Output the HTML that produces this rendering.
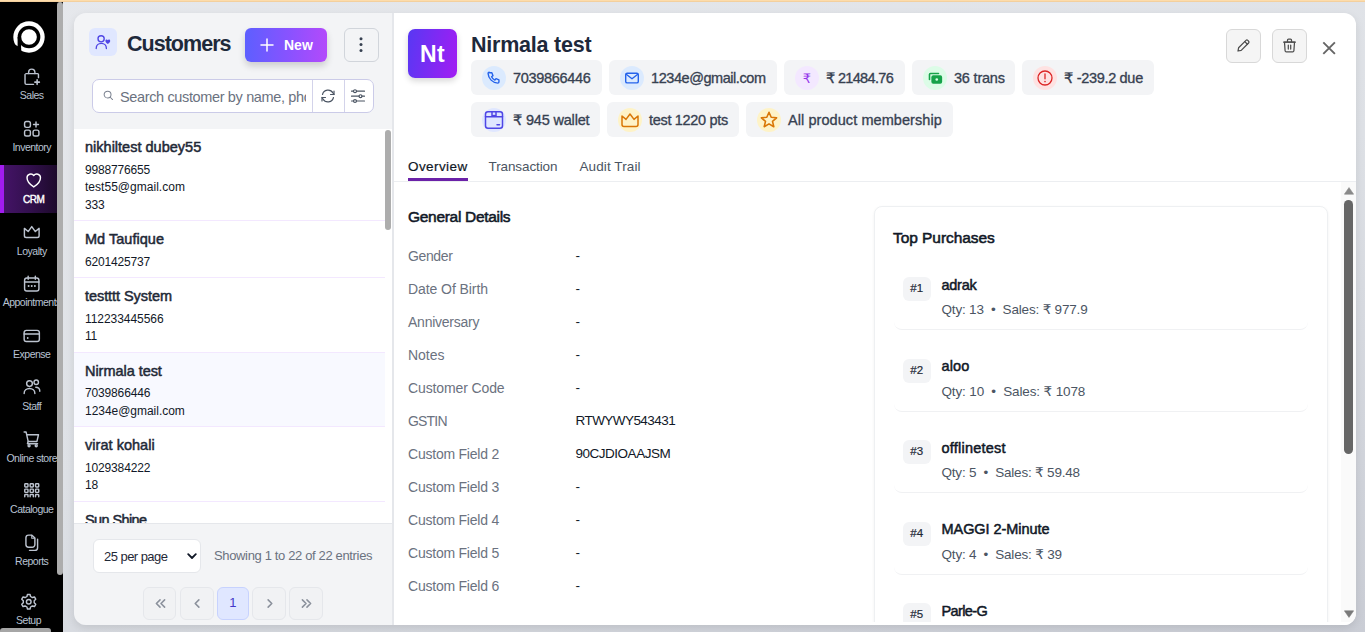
<!DOCTYPE html>
<html lang="en">
<head>
<meta charset="utf-8">
<title>Customers</title>
<style>
*{box-sizing:border-box;margin:0;padding:0}
html,body{width:1365px;height:632px;overflow:hidden}
body{position:relative;background:linear-gradient(165deg,#e6e8ec 0%,#dee1e6 50%,#cacdd5 100%);font-family:"Liberation Sans","DejaVu Sans",sans-serif;color:#111827}
.abs{position:absolute}
#topbar{left:0;top:0;width:1365px;height:2px;background:linear-gradient(#fddcab 0,#fddcab 55%,#e6c08e 100%)}
/* sidebar */
#side{left:0;top:2px;width:63px;height:630px;background:#000;overflow:hidden}#sideclip{left:0;top:0;width:57px;height:630px;overflow:hidden}
#sidescroll{left:0;top:625.500px;width:51px;height:6px;border-radius:3px 3px 0 0;background:#a6a6a6}
#sidethumb{left:57px;top:0px;width:5.500px;height:572.500px;border-radius:3px;background:#adadad}
.nav{position:absolute;left:0;width:63px;text-align:center;color:#c8cdd6;font-size:11px;white-space:nowrap}
.nav svg{position:absolute;left:21px;top:1.500px;width:21.500px;height:21.500px;stroke:#bcc3cf;fill:none;stroke-width:1.600;stroke-linecap:round;stroke-linejoin:round}
.nav.act{color:#fff;margin-left:2px}.nav.act svg{stroke:#fff}.nav.act span{color:#fff;font-weight:400;-webkit-text-stroke:0.400px #fff;letter-spacing:-0.350px;font-size:10px;top:25px}.nav.act svg{top:1.500px}
.nav span{position:absolute;top:25px;left:0;width:63.500px;text-align:center;line-height:13px;font-size:10.500px;letter-spacing:-0.500px;color:#b9c3d3}
/* left panel */
#lp{left:74px;top:13px;width:319px;height:612px;background:#f3f4f6;border-radius:12px 0 0 12px;overflow:hidden}
#rp{left:393px;top:13px;width:963px;height:612px;background:#fff;border-radius:0 12px 12px 0;overflow:hidden}
.cust{position:absolute;left:0;width:311px;border-bottom:1px solid #f3e8ff}
.cust b{position:absolute;left:11px;font-size:14.500px;font-weight:400;-webkit-text-stroke:0.500px #1f2937;color:#1f2937;white-space:nowrap}
.cust i{position:absolute;left:11px;font-style:normal;font-size:12px;color:#111827;white-space:nowrap}
.chip{position:absolute;height:35px;background:#f3f4f6;border-radius:6px}
.chip .ic{position:absolute;left:11px;top:5.500px;width:24px;height:24px;border-radius:12px}
.chip .tx{position:absolute;left:42px;top:0;line-height:36px;font-size:14.5px;color:#374151;white-space:nowrap;-webkit-text-stroke:0.330px #374151}
.lbl{position:absolute;left:15px;font-size:14px;line-height:16px;color:#6b7280;white-space:nowrap}
.val{position:absolute;left:182.500px;font-size:13.500px;line-height:16px;color:#111827;white-space:nowrap}
.tp{position:absolute;left:18.500px;width:414.500px;height:67.300px;border-bottom:1px solid #f0f1f3;border-radius:8px}
.tp .n{position:absolute;left:9px;top:14px;width:28.500px;height:24px;border-radius:6px;background:#f3f4f6;font-size:11.500px;line-height:23px;text-align:center;color:#1f2937;-webkit-text-stroke:0.200px #1f2937}
.tp .t{position:absolute;left:48px;top:13.500px;font-size:14.500px;line-height:16px;font-weight:400;-webkit-text-stroke:0.500px #111827;color:#111827;white-space:nowrap}
.tp .q{position:absolute;left:48px;top:39px;font-size:13.500px;line-height:16px;color:#4b5563;white-space:nowrap}

.pg{position:absolute;top:574.300px;width:33.400px;height:32.400px;border-radius:6px;border:1px solid #e5e7eb;background:#f1f2f4;text-align:center;line-height:30px;font-size:13px;color:#6b7280}
.pg.cur{width:31.500px;background:#e0e7ff;border-color:#c7d2fe;color:#4338ca}
.pg svg{position:absolute;left:10.500px;top:10px;width:11px;height:11px;fill:none;stroke:#8b919c;stroke-width:1.700;stroke-linecap:round;stroke-linejoin:round}

.ics{position:absolute;left:11px;top:5.500px;width:24px;height:24px;fill:none;stroke-width:1.300;stroke-linecap:round;stroke-linejoin:round}
.tab{position:absolute;line-height:20px;font-size:13.500px;color:#4b5563;white-space:nowrap}
</style>
</head>
<body>
<div id="topbar" class="abs"></div>
<div id="side" class="abs"><div id="sideclip" class="abs">
<svg class="abs" style="left:12.700px;top:18.500px" width="32" height="32" viewBox="0 0 32 32"><circle cx="16" cy="16" r="15.700" fill="#fff"/><circle cx="16" cy="16" r="9.600" fill="none" stroke="#000" stroke-width="3.500"/><rect x="4.600" y="16" width="3.500" height="16" fill="#000"/><polygon points="0,22.500 8.100,27 8.100,32 0,32" fill="#000"/></svg><div class="abs" style="left:0;top:163px;width:57px;height:48px;background:linear-gradient(90deg,#47146a 0%,#33104f 50%,#1d0a2b 100%)"></div><div class="abs" style="left:0;top:163px;width:4px;height:48px;background:#a21cf0"></div>
<div class="nav" style="top:62.40px"><svg viewBox="0 0 24 24"><path d="M5.5 8.5h13a1 1 0 0 1 1 1V13M4.5 9.5V19a1.5 1.5 0 0 0 1.500 1.500h8"/><path d="M8.500 8.500V7a3.500 3.500 0 0 1 7 0v1.500"/><path d="M18 15.500v5M15.500 18h5" stroke-width="1.800"/></svg><span>Sales</span></div>
<div class="nav" style="top:114.15px"><svg viewBox="0 0 24 24"><rect x="4" y="4" width="6.500" height="6.500" rx="2"/><rect x="4" y="13.500" width="6.500" height="6.500" rx="2"/><rect x="13.500" y="13.500" width="6.500" height="6.500" rx="2"/><path d="M16.750 4.500v5.500M14 7.250h5.500"/></svg><span>Inventory</span></div>
<div class="nav act" style="top:165.90px"><svg viewBox="0 0 24 24"><path d="M12 20s-7.500-4.600-7.500-10.200A4.200 4.200 0 0 1 12 7.200a4.200 4.200 0 0 1 7.500 2.600C19.500 15.400 12 20 12 20z"/></svg><span>CRM</span></div>
<div class="nav" style="top:217.65px"><svg viewBox="0 0 24 24"><path d="M3.800 8.200l4.200 3.600L12 6.200l4 5.600 4.200-3.600v8.300a2 2 0 0 1-2 2H5.800a2 2 0 0 1-2-2z"/></svg><span>Loyalty</span></div>
<div class="nav" style="top:269.40px"><svg viewBox="0 0 24 24"><rect x="4" y="5.500" width="16" height="14.500" rx="2.500"/><path d="M4 10h16M8 3.500v3.500M16 3.500v3.500"/><path d="M8.500 14.500h.01M12 14.500h.01M15.500 14.500h.01" stroke-width="2.200"/></svg><span>Appointments</span></div>
<div class="nav" style="top:321.15px"><svg viewBox="0 0 24 24"><rect x="3.500" y="6" width="17" height="12.500" rx="2.500"/><path d="M3.500 10h17"/><path d="M7.500 14.500h.01" stroke-width="2"/></svg><span>Expense</span></div>
<div class="nav" style="top:372.90px"><svg viewBox="0 0 24 24"><circle cx="9.500" cy="8.500" r="3.200"/><path d="M3.500 19.500c0-3.300 2.700-5.500 6-5.500s6 2.200 6 5.500"/><circle cx="17" cy="7" r="2.500"/><path d="M16.500 12.500c2.500 0 4.500 1.700 4.500 4.500"/></svg><span>Staff</span></div>
<div class="nav" style="top:424.65px"><svg viewBox="0 0 24 24"><path d="M3.500 4.500h2.200l2.300 10.500h9.800l1.700-7.500H6.500"/><path d="M8 15l-.8 2.500h11.300"/><circle cx="9" cy="19.800" r="1.100"/><circle cx="17" cy="19.800" r="1.100"/></svg><span>Online store</span></div>
<div class="nav" style="top:476.40px"><svg viewBox="0 0 24 24"><rect x="4.2" y="4.2" width="3.600" height="3.600" rx="0.800"/><rect x="10.2" y="4.2" width="3.600" height="3.600" rx="0.800"/><rect x="16.2" y="4.2" width="3.600" height="3.600" rx="0.800"/><rect x="4.2" y="10.2" width="3.600" height="3.600" rx="0.800"/><rect x="10.2" y="10.2" width="3.600" height="3.600" rx="0.800"/><rect x="16.2" y="10.2" width="3.600" height="3.600" rx="0.800"/><path d="M4.2 18.600v-1.600a.8.800 0 0 1 .8-.8h2a.8.800 0 0 1 .8.800v1.600"/><path d="M10.2 18.600v-1.600a.8.800 0 0 1 .8-.8h2a.8.800 0 0 1 .8.800v1.600"/><path d="M16.2 18.600v-1.600a.8.800 0 0 1 .8-.8h2a.8.800 0 0 1 .8.800v1.600"/></svg><span>Catalogue</span></div>
<div class="nav" style="top:528.15px"><svg viewBox="0 0 24 24"><path d="M8.500 3.500h3.700l3.300 3.300v7.200a3 3 0 0 1-3 3h-4a3 3 0 0 1-3-3v-7.500a3 3 0 0 1 3-3z"/><path d="M12 3.800v3.200h3.200" stroke-width="1.200"/><path d="M18.500 8v9.500a3 3 0 0 1-3 3H9.500"/></svg><span>Reports</span></div>
</div>
<div class="nav" style="top:587px;left:-3.200px"><svg viewBox="0 0 24 24"><circle cx="12" cy="12" r="2.600"/><path d="M9.98 6.14 L10.56 3.83 L13.44 3.83 L14.02 6.14 L16.07 7.32 L18.36 6.66 L19.80 9.16 L18.09 10.82 L18.09 13.18 L19.80 14.84 L18.36 17.34 L16.07 16.68 L14.02 17.86 L13.44 20.17 L10.56 20.17 L9.98 17.86 L7.93 16.68 L5.64 17.34 L4.20 14.84 L5.91 13.18 L5.91 10.82 L4.20 9.16 L5.64 6.66 L7.93 7.32z"/></svg><span>Setup</span></div>
<div id="sidescroll" class="abs"></div>
<div id="sidethumb" class="abs"></div>
</div>
<div class="abs" style="left:74px;top:13px;width:1282px;height:612px;border-radius:12px;box-shadow:0 3px 8px rgba(0,0,0,.10)"></div>
<div id="lp" class="abs">
<div class="abs" style="left:15px;top:15px;width:28px;height:28px;border-radius:6px;background:#e0e7ff"></div>
<svg class="abs" style="left:20px;top:20px" width="18" height="18" viewBox="0 0 18 18" fill="none" stroke="#4f46e5" stroke-width="1.350" stroke-linecap="round"><circle cx="7.100" cy="5.800" r="3.100"/><path d="M2.200 15.500c0-3 2.200-5.100 5.100-5.100s5.100 2.100 5.100 5.100"/><path d="M13.800 10.900c-1.500-.9-2.400-1.800-2.400-2.900 0-1.500 1.800-1.900 2.400-.7.600-1.200 2.400-.8 2.400.7 0 1.100-.9 2-2.400 2.900z" fill="#4f46e5" stroke="none"/></svg>
<div class="abs" style="left:53px;top:18px;font-size:21.500px;font-weight:700;color:#1e293b;line-height:26px;white-space:nowrap;letter-spacing:-0.977px">Customers</div>
<div class="abs" style="left:171px;top:15px;width:82px;height:34px;border-radius:6px;background:linear-gradient(90deg,#5d5fff,#8a52ff 55%,#b34afb);box-shadow:0 4px 7px rgba(0,0,0,.16)"></div>
<svg class="abs" style="left:186px;top:25px" width="14" height="14" viewBox="0 0 14 14" stroke="#fff" stroke-width="1.500" stroke-linecap="round"><path d="M7 1v12M1 7h12"/></svg>
<div class="abs" style="left:210px;top:15px;line-height:34px;font-size:14px;font-weight:700;color:#fff">New</div>
<div class="abs" style="left:270px;top:15px;width:35px;height:34px;border-radius:6px;border:1px solid #d1d5db;background:#f3f4f6"></div>
<svg class="abs" style="left:283px;top:22px" width="8" height="20" viewBox="0 0 8 20"><circle cx="4" cy="3.700" r="1.500" fill="#374151"/><circle cx="4" cy="9.600" r="1.500" fill="#374151"/><circle cx="4" cy="15.500" r="1.500" fill="#374151"/></svg>
<div class="abs" style="left:18px;top:66px;width:282px;height:34px;border-radius:7px;border:1px solid #cbcbe8;background:#fff"></div>
<div class="abs" style="left:238px;top:67px;width:1px;height:32px;background:#d3d3ea"></div>
<div class="abs" style="left:270px;top:67px;width:1px;height:32px;background:#d3d3ea"></div>
<svg class="abs" style="left:29.300px;top:77.300px" width="10.500" height="10.500" viewBox="0 0 11 11" fill="none" stroke="#7b8290" stroke-width="1.050" stroke-linecap="round"><circle cx="4.800" cy="4.800" r="3.600"/><path d="M7.600 7.600l2.400 2.400"/></svg>
<div class="abs" style="left:46px;top:68px;width:185.500px;overflow:hidden;line-height:33px;font-size:14.500px;color:#6b7280;white-space:nowrap;letter-spacing:-0.360px">Search customer by name, phone</div>
<svg class="abs" style="left:246px;top:75px" width="16" height="16" viewBox="0 0 16 16" fill="none" stroke="#4b5563" stroke-width="1.200" stroke-linecap="round" stroke-linejoin="round"><path d="M2.500 6.500a5.700 5.700 0 0 1 10.500-1.500l1 1.500"/><path d="M14 3v3.500h-3.500"/><path d="M13.500 9.500a5.700 5.700 0 0 1-10.500 1.500l-1-1.500"/><path d="M2 13v-3.500h3.500"/></svg>
<svg class="abs" style="left:276px;top:75px" width="16" height="16" viewBox="0 0 16 16" fill="none" stroke="#4b5563" stroke-width="1.200" stroke-linecap="round"><path d="M1.500 3.200h2M6.500 3.200h8M1.500 8.200h7.500M12 8.200h2.500M1.500 13h2M6.500 13h8"/><circle cx="5" cy="3.200" r="1.450"/><circle cx="10.500" cy="8.200" r="1.450"/><circle cx="5" cy="13" r="1.450"/></svg>
<div class="abs" style="left:0;top:116px;width:319px;height:394px;background:#fff;overflow:hidden">
  <div class="abs" style="left:0;top:223px;width:311px;height:74px;background:#f8f9ff"></div>
  <div class="cust" style="top:0;height:92px"><b style="top:10px;letter-spacing:0.007px">nikhiltest dubey55</b><i style="top:34px;letter-spacing:-0.183px">9988776655</i><i style="top:51px;letter-spacing:0.023px">test55@gmail.com</i><i style="top:69px;letter-spacing:-0.166px">333</i></div>
  <div class="cust" style="top:92px;height:57px"><b style="top:10px;letter-spacing:0.027px">Md Taufique</b><i style="top:34px;letter-spacing:-0.183px">6201425737</i></div>
  <div class="cust" style="top:149px;height:75px"><b style="top:10px;letter-spacing:-0.065px">testttt System</b><i style="top:34px;letter-spacing:-0.055px">112233445566</i><i style="top:51px;letter-spacing:-0.169px">11</i></div>
  <div class="cust" style="top:224px;height:74px"><b style="top:10px;letter-spacing:-0.042px">Nirmala test</b><i style="top:33px;letter-spacing:-0.150px">7039866446</i><i style="top:51px;letter-spacing:-0.031px">1234e@gmail.com</i></div>
  <div class="cust" style="top:298px;height:75px"><b style="top:10px;letter-spacing:0.035px">virat kohali</b><i style="top:34px;letter-spacing:-0.150px">1029384222</i><i style="top:51px;letter-spacing:-0.159px">18</i></div>
  <div class="cust" style="top:373px;height:75px;border:0"><b style="top:10px;letter-spacing:-0.603px">Sun Shine</b></div>
  <div class="abs" style="left:311px;top:0.500px;width:6px;height:100px;border-radius:3px;background:#adadad"></div>
</div>
<div class="abs" style="left:0;top:510px;width:319px;height:1px;background:#e5e7eb"></div>
<div class="abs" style="left:19px;top:526px;width:108px;height:34px;border-radius:6px;border:1px solid #e5e7eb;background:#fff"></div>
<div class="abs" style="left:30px;top:527px;line-height:34px;font-size:13px;color:#1f2937;letter-spacing:-0.541px">25 per page</div>
<svg class="abs" style="left:113px;top:540px" width="10" height="7" viewBox="0 0 10 7" fill="none" stroke="#111827" stroke-width="1.800" stroke-linecap="round" stroke-linejoin="round"><path d="M1.200 1.200l3.800 3.800 3.800-3.800"/></svg>
<div class="abs" style="left:140px;top:526px;line-height:34px;font-size:13px;color:#6b7280;white-space:nowrap;letter-spacing:-0.353px">Showing 1 to 22 of 22 entries</div>
<div class="pg" style="left:69.100px"><svg viewBox="0 0 12 12"><path d="M5.500 2l-4 4 4 4M10.500 2l-4 4 4 4"/></svg></div>
<div class="pg" style="left:106.200px"><svg viewBox="0 0 12 12"><path d="M7.500 2l-4 4 4 4"/></svg></div>
<div class="pg cur" style="left:143.200px">1</div>
<div class="pg" style="left:178.200px"><svg viewBox="0 0 12 12"><path d="M4.500 2l4 4-4 4"/></svg></div>
<div class="pg" style="left:215.200px"><svg viewBox="0 0 12 12"><path d="M1.500 2l4 4-4 4M6.500 2l4 4-4 4"/></svg></div>
</div>
<div id="rp" class="abs"><div class="abs" style="left:15px;top:16px;width:49px;height:49px;border-radius:7px;background:linear-gradient(100deg,#5838f3,#a21df3);box-shadow:0 3px 6px rgba(0,0,0,.16)"></div><div class="abs" style="left:15px;top:16px;width:49px;line-height:51px;text-align:center;color:#fff;font-weight:700;font-size:23px;letter-spacing:0.400px">Nt</div><div class="abs" style="left:78px;top:19px;line-height:26px;font-size:21.500px;font-weight:700;color:#1e293b;white-space:nowrap;letter-spacing:-0.227px">Nirmala test</div><div class="chip" style="left:78px;top:47px;width:130.5px"><div class="ic" style="background:#dbeafe"></div><svg class="ics" viewBox="0 0 24 24"><path transform="translate(12 12) scale(1.120) translate(-11.100 -11.200)" stroke-width="1.250" d="M7.200 6.500h2l1 2.600-1.300 1c.6 1.300 1.700 2.400 3 3l1-1.300 2.600 1v2c0 .6-.5 1-1 1-4.700-.3-8.400-4-8.700-8.700 0-.5.400-1 1-1z" stroke="#2563eb"/></svg><div class="tx" style="letter-spacing:-0.328px">7039866446</div></div>
<div class="chip" style="left:216px;top:47px;width:168px"><div class="ic" style="background:#dbeafe"></div><svg class="ics" viewBox="0 0 24 24"><rect x="5.700" y="7.300" width="12.600" height="9.600" rx="1.500" stroke="#2563eb" stroke-width="1.400"/><path d="M6.200 8.300l5.800 4.400 5.800-4.400" stroke="#2563eb" stroke-width="1.400"/></svg><div class="tx" style="letter-spacing:-0.438px">1234e@gmail.com</div></div>
<div class="chip" style="left:391px;top:47px;width:121px"><div class="ic" style="background:#f3e8ff"></div><svg class="ics" viewBox="0 0 24 24"><text x="12" y="16.500" text-anchor="middle" font-size="13" fill="#9333ea" stroke="none" font-family="DejaVu Sans, sans-serif">₹</text></svg><div class="tx" style="letter-spacing:-0.670px">₹ 21484.76</div></div>
<div class="chip" style="left:519px;top:47px;width:102.5px"><div class="ic" style="background:#dcfce7"></div><svg class="ics" viewBox="0 0 24 24"><path d="M6.500 13.500v-5a1 1 0 0 1 1-1h8" stroke="#16a34a" stroke-width="1.600"/><rect x="9" y="10" width="9.500" height="7" rx="1.200" fill="#16a34a" stroke="#16a34a"/><circle cx="13.750" cy="13.500" r="1.300" fill="#dcfce7" stroke="none"/></svg><div class="tx" style="letter-spacing:-0.201px">36 trans</div></div>
<div class="chip" style="left:629px;top:47px;width:132px"><div class="ic" style="background:#fee2e2"></div><svg class="ics" viewBox="0 0 24 24"><circle cx="12" cy="12" r="7" stroke="#dc2626"/><path d="M12 8v4.800" stroke="#dc2626"/><path d="M12 15.600v.01" stroke="#dc2626" stroke-width="1.600"/></svg><div class="tx" style="letter-spacing:-0.309px">₹ -239.2 due</div></div>
<div class="chip" style="left:78px;top:89px;width:128.5px"><div class="ic" style="background:#e0e7ff"></div><svg class="ics" viewBox="0 0 24 24"><rect x="3.500" y="3.700" width="17" height="16.600" rx="2.500" stroke="#4f46e5" stroke-width="1.500"/><path d="M3.500 8.700h17M10 3.700v5l2-1.200 2 1.200v-5M15 16.800h2.500" stroke="#4f46e5" stroke-width="1.500"/></svg><div class="tx" style="letter-spacing:-0.177px">₹ 945 wallet</div></div>
<div class="chip" style="left:214px;top:89px;width:131.5px"><div class="ic" style="background:#fef3c7"></div><svg class="ics" viewBox="0 0 24 24"><path d="M4 8l4 3.400L12 6l4 5.400L20 8v8.500a2 2 0 0 1-2 2H6a2 2 0 0 1-2-2z" stroke="#d97706" stroke-width="1.500"/></svg><div class="tx" style="letter-spacing:-0.319px">test 1220 pts</div></div>
<div class="chip" style="left:353px;top:89px;width:207px"><div class="ic" style="background:#fef3c7"></div><svg class="ics" viewBox="0 0 24 24"><path d="M12 4.300l2.200 5 5.400.5-4.100 3.600 1.300 5.300L12 15.900l-4.800 2.800 1.300-5.300-4.100-3.600 5.400-.5z" stroke="#d97706" stroke-width="1.600" stroke-linejoin="round"/></svg><div class="tx" style="letter-spacing:0.070px">All product membership</div></div>
<div class="abs" style="left:833px;top:16px;width:35px;height:34px;border-radius:6px;border:1px solid #d8d8d8;background:#f5f5f5"></div><svg class="abs" style="left:842px;top:24px" width="17" height="17" viewBox="0 0 17 17" fill="none" stroke="#4d4d4d" stroke-width="1.250" stroke-linejoin="round" stroke-linecap="round"><path d="M3 14l.6-3.200L11 3.400a1.300 1.300 0 0 1 1.800 0l.8.800a1.300 1.300 0 0 1 0 1.800L6.200 13.400z"/><path d="M9.800 4.600l2.600 2.600"/></svg><div class="abs" style="left:879px;top:16px;width:35px;height:34px;border-radius:6px;border:1px solid #d8d8d8;background:#f5f5f5"></div><svg class="abs" style="left:888px;top:24px" width="17" height="17" viewBox="0 0 17 17" fill="none" stroke="#4d4d4d" stroke-width="1.250" stroke-linejoin="round" stroke-linecap="round"><path d="M3.500 5.200l.6 8.600a1.200 1.200 0 0 0 1.200 1.100h6.400a1.200 1.200 0 0 0 1.200-1.100l.6-8.600z" /><path d="M2.500 5h12M6.500 4.800V3a1 1 0 0 1 1-1h2a1 1 0 0 1 1 1v1.800M7.300 8v4M9.700 8v4"/></svg><svg class="abs" style="left:929px;top:28px" width="15" height="15" viewBox="0 0 15 15" fill="none" stroke="#666" stroke-width="1.900" stroke-linecap="butt"><path d="M1.300 1.300l11.600 11.600M12.900 1.300l-11.600 11.600"/></svg><div class="tab" style="left:15px;top:144px;color:#111827;-webkit-text-stroke:0.200px #111827;letter-spacing:0.419px">Overview</div><div class="tab" style="left:95.5px;top:144px;letter-spacing:-0.103px">Transaction</div><div class="tab" style="left:186.5px;top:144px;letter-spacing:0.097px">Audit Trail</div><div class="abs" style="left:15px;top:165px;width:60px;height:3px;background:#6b21a8"></div><div class="abs" style="left:0;top:168px;width:963px;height:1px;background:#eceef1"></div><div class="abs" style="left:15px;top:194px;line-height:20px;font-size:15.500px;font-weight:400;-webkit-text-stroke:0.550px #111827;color:#111827;white-space:nowrap;letter-spacing:-0.302px">General Details</div><div class="lbl" style="top:235px;letter-spacing:-0.381px">Gender</div><div class="val" style="top:235px">-</div>
<div class="lbl" style="top:268px;letter-spacing:-0.077px">Date Of Birth</div><div class="val" style="top:268px">-</div>
<div class="lbl" style="top:301px;letter-spacing:-0.242px">Anniversary</div><div class="val" style="top:301px">-</div>
<div class="lbl" style="top:334px;letter-spacing:-0.020px">Notes</div><div class="val" style="top:334px">-</div>
<div class="lbl" style="top:367px;letter-spacing:-0.121px">Customer Code</div><div class="val" style="top:367px">-</div>
<div class="lbl" style="top:400px;letter-spacing:-0.820px">GSTIN</div><div class="val" style="top:400px;letter-spacing:-0.554px">RTWYWY543431</div>
<div class="lbl" style="top:433px;letter-spacing:-0.227px">Custom Field 2</div><div class="val" style="top:433px;letter-spacing:-0.485px">90CJDIOAAJSM</div>
<div class="lbl" style="top:466px;letter-spacing:-0.227px">Custom Field 3</div><div class="val" style="top:466px">-</div>
<div class="lbl" style="top:499px;letter-spacing:-0.227px">Custom Field 4</div><div class="val" style="top:499px">-</div>
<div class="lbl" style="top:532px;letter-spacing:-0.227px">Custom Field 5</div><div class="val" style="top:532px">-</div>
<div class="lbl" style="top:565px;letter-spacing:-0.227px">Custom Field 6</div><div class="val" style="top:565px">-</div>
<div class="abs" style="left:481px;top:193px;width:454px;height:440px;border:1px solid #eef0f2;border-radius:8px;box-shadow:0 1px 3px rgba(0,0,0,.06);background:#fff"><div class="abs" style="left:18px;top:21px;line-height:20px;font-size:15.500px;font-weight:400;-webkit-text-stroke:0.550px #111827;color:#111827;white-space:nowrap;letter-spacing:-0.061px">Top Purchases</div><div class="tp" style="top:56.0px"><div class="n">#1</div><div class="t" style="letter-spacing:-0.270px">adrak</div><div class="q" style="letter-spacing:-0.178px">Qty: 13 &nbsp;•&nbsp; Sales: ₹ 977.9</div></div>
<div class="tp" style="top:137.5px"><div class="n">#2</div><div class="t" style="letter-spacing:0.159px">aloo</div><div class="q" style="letter-spacing:-0.129px">Qty: 10 &nbsp;•&nbsp; Sales: ₹ 1078</div></div>
<div class="tp" style="top:219.0px"><div class="n">#3</div><div class="t" style="letter-spacing:0.229px">offlinetest</div><div class="q" style="letter-spacing:-0.189px">Qty: 5 &nbsp;•&nbsp; Sales: ₹ 59.48</div></div>
<div class="tp" style="top:300.5px"><div class="n">#4</div><div class="t" style="letter-spacing:-0.060px">MAGGI 2-Minute</div><div class="q" style="letter-spacing:-0.185px">Qty: 4 &nbsp;•&nbsp; Sales: ₹ 39</div></div>
<div class="tp" style="top:382.0px"><div class="n">#5</div><div class="t" style="letter-spacing:-0.611px">Parle-G</div><div class="q" style="letter-spacing:-0.185px">Qty: 3 &nbsp;•&nbsp; Sales: ₹ 30</div></div>
</div><div class="abs" style="left:0;top:608.500px;width:963px;height:4px;background:#fff"></div><div class="abs" style="left:948px;top:169px;width:15px;height:440px;background:#fafafa"></div><div class="abs" style="left:951px;top:187px;width:9px;height:254px;border-radius:4.500px;background:#666"></div><svg class="abs" style="left:950.500px;top:173.500px" width="10" height="8" viewBox="0 0 10 8"><path d="M5 0.600L9.600 7.200H0.400z" fill="#8a8a8a" stroke="#8a8a8a" stroke-width="0.600" stroke-linejoin="round"/></svg><svg class="abs" style="left:950.500px;top:596.500px" width="10" height="8" viewBox="0 0 10 8"><path d="M5 7.400L9.600 0.800H0.400z" fill="#7a7a7a" stroke="#7a7a7a" stroke-width="0.600" stroke-linejoin="round"/></svg></div>
<div class="abs" style="left:391.500px;top:13px;width:2.300px;height:612px;background:#e5e7eb"></div>
</body>
</html>
